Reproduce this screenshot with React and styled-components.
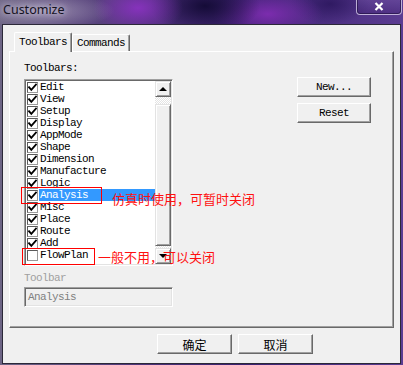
import React from "react";
import styled, { createGlobalStyle } from "styled-components";

const GlobalStyle = createGlobalStyle`
  html, body {
    margin: 0;
    padding: 0;
    background: #3a2468;
  }
  body {
    width: 403px;
    height: 365px;
    overflow: hidden;
  }
`;

const mono = `"Liberation Mono", "DejaVu Sans Mono", monospace`;
const cjk = `"Noto Sans CJK SC", "Noto Sans", sans-serif`;

const Window = styled.div`
  position: relative;
  width: 403px;
  height: 365px;
  box-sizing: border-box;
  display: flex;
  flex-direction: column;
  padding: 0 2px 1px 2px;
  background:
    radial-gradient(ellipse 70px 18px at 45px 11px, rgba(190, 180, 205, 0.55), transparent),
    radial-gradient(ellipse 45px 26px at 138px 8px, rgba(140, 50, 195, 0.9), transparent),
    radial-gradient(ellipse 55px 28px at 205px 6px, rgba(18, 10, 52, 0.95), transparent),
    radial-gradient(ellipse 55px 24px at 268px 14px, rgba(130, 45, 180, 0.9), transparent),
    radial-gradient(ellipse 40px 20px at 330px 4px, rgba(40, 20, 90, 0.8), transparent),
    linear-gradient(90deg, #6d6585 0%, #4e3379 35%, #3b2170 60%, #5b3c92 100%);
`;

const TitleBar = styled.div`
  height: 24px;
  display: flex;
  align-items: flex-start;
  padding-left: 1px;
`;

const Title = styled.div`
  font-family: "Noto Sans", "Open Sans", sans-serif;
  font-size: 12.5px;
  line-height: 16px;
  padding-top: 2px;
  color: #14121e;
  text-shadow: 0 0 6px rgba(230, 225, 240, 0.9), 0 0 10px rgba(230, 225, 240, 0.6);
`;

const CloseButton = styled.div`
  margin-left: auto;
  margin-right: -1px;
  margin-top: -1px;
  width: 46px;
  height: 16px;
  box-sizing: border-box;
  border: 1px solid rgba(225, 215, 240, 0.75);
  border-top: none;
  border-radius: 0 0 4px 4px;
  box-shadow: inset 0 0 0 1px rgba(30, 15, 60, 0.6);
  background: linear-gradient(180deg, rgba(120, 90, 170, 0.35), rgba(60, 30, 110, 0.35));
  display: flex;
  align-items: center;
  justify-content: center;
`;

const Client = styled.div`
  flex: 1;
  display: flex;
  flex-direction: column;
  background: #f0f0f0;
  border: 1px solid #2b2838;
`;

const TabArea = styled.div`
  padding: 7px 0 0 6px;
  display: flex;
  flex-direction: column;
`;

const TabRow = styled.div`
  display: flex;
  align-items: flex-end;
  margin-left: 5px;
  height: 19px;
  position: relative;
  z-index: 1;
`;

const Tab = styled.div`
  box-sizing: border-box;
  width: 58px;
  height: ${(p) => (p.$active ? "20px" : "17px")};
  margin-bottom: ${(p) => (p.$active ? "-1px" : "0")};
  background: #f0f0f0;
  border-top: 1px solid #ffffff;
  border-left: 1px solid #ffffff;
  border-right: 1px solid #696969;
  box-shadow: inset -1px 0 0 #a0a0a0;
  border-radius: 2px 2px 0 0;
  font-family: ${mono};
  font-size: 11px;
  letter-spacing: -0.6px;
  line-height: 12px;
  color: #000;
  display: flex;
  align-items: center;
  justify-content: center;
  padding-bottom: ${(p) => (p.$active ? "1px" : "0")};
`;

const Panel = styled.div`
  box-sizing: border-box;
  width: 385px;
  height: 277px;
  border-top: 1px solid #ffffff;
  border-left: 1px solid #ffffff;
  border-right: 1px solid #696969;
  border-bottom: 1px solid #696969;
  box-shadow: inset -1px -1px 0 #a0a0a0;
  display: flex;
`;

const LeftCol = styled.div`
  padding: 10px 0 0 14px;
  width: 149px;
  display: flex;
  flex-direction: column;
`;

const RightCol = styled.div`
  padding: 25px 0 0 124px;
  display: flex;
  flex-direction: column;
  gap: 6px;
`;

const Label = styled.div`
  font-family: ${mono};
  font-size: 11px;
  letter-spacing: -0.6px;
  line-height: 12px;
  height: 12px;
  color: ${(p) => (p.$disabled ? "#a0a0a0" : "#000")};
  white-space: nowrap;
  margin-top: ${(p) => p.$mt || "0"};
`;

const ListBox = styled.div`
  margin-top: 5px;
  box-sizing: border-box;
  width: 149px;
  height: 187px;
  background: #fff;
  border-top: 1px solid #a0a0a0;
  border-left: 1px solid #a0a0a0;
  border-right: 1px solid #ffffff;
  border-bottom: 1px solid #ffffff;
  box-shadow: inset 1px 1px 0 #696969, inset -1px -1px 0 #e3e3e3;
  padding: 1px;
  display: flex;
  overflow: hidden;
`;

const Items = styled.div`
  flex: 1;
  display: flex;
  flex-direction: column;
  padding-left: 1px;
  min-width: 0;
`;

const Row = styled.div`
  height: 12px;
  display: flex;
  align-items: center;
  flex-shrink: 0;
`;

const Check = styled.div`
  box-sizing: border-box;
  width: 11px;
  height: 11px;
  background: #fff;
  border-top: 1px solid #5a5a5a;
  border-left: 1px solid #5a5a5a;
  border-right: 1px solid #9a9a9a;
  border-bottom: 1px solid #9a9a9a;
  display: flex;
  align-items: center;
  justify-content: center;
  flex-shrink: 0;
`;

const ItemText = styled.div`
  margin-left: 1px;
  flex: 1;
  height: 12px;
  padding-left: 1px;
  font-family: ${mono};
  font-size: 11px;
  letter-spacing: -0.6px;
  line-height: 12px;
  color: ${(p) => (p.$selected ? "#fff" : "#000")};
  background: ${(p) => (p.$selected ? "#3399ff" : "transparent")};
  white-space: nowrap;
`;

const ScrollBar = styled.div`
  width: 16px;
  display: flex;
  flex-direction: column;
  background-color: #fff;
  background-image: repeating-conic-gradient(#e4e4e4 0 25%, #ffffff 0 50%);
  background-size: 2px 2px;
`;

const Raised = styled.div`
  box-sizing: border-box;
  background: #f0f0f0;
  border-top: 1px solid #e3e3e3;
  border-left: 1px solid #e3e3e3;
  border-right: 1px solid #696969;
  border-bottom: 1px solid #696969;
  box-shadow: inset 1px 1px 0 #ffffff, inset -1px -1px 0 #a0a0a0;
`;

const ScrollButton = styled(Raised)`
  height: 16px;
  display: flex;
  align-items: center;
  justify-content: center;
  flex-shrink: 0;
`;

const Thumb = styled(Raised)`
  margin-top: 7px;
  height: 142px;
  flex-shrink: 0;
`;

const Spacer = styled.div`
  flex: 1;
`;

const Arrow = styled.div`
  width: 0;
  height: 0;
  border-left: 4px solid transparent;
  border-right: 4px solid transparent;
  ${(p) =>
    p.$down
      ? "border-top: 4px solid #000;"
      : "border-bottom: 4px solid #000;"}
`;

const TextField = styled.div`
  margin-top: 3px;
  box-sizing: border-box;
  width: 149px;
  height: 20px;
  background: #f0f0f0;
  border-top: 1px solid #a0a0a0;
  border-left: 1px solid #a0a0a0;
  border-right: 1px solid #ffffff;
  border-bottom: 1px solid #ffffff;
  box-shadow: inset 1px 1px 0 #696969, inset -1px -1px 0 #e3e3e3;
  padding: 3px 0 0 3px;
  font-family: ${mono};
  font-size: 11px;
  letter-spacing: -0.6px;
  line-height: 12px;
  color: #808080;
`;

const Button = styled(Raised)`
  width: ${(p) => p.$w || "74px"};
  height: 20px;
  display: flex;
  align-items: center;
  justify-content: center;
  font-family: ${(p) => (p.$cjk ? cjk : mono)};
  font-size: ${(p) => (p.$cjk ? "12px" : "11px")};
  letter-spacing: ${(p) => (p.$cjk ? "0" : "-0.6px")};
  color: #000;
  border-top-color: #ffffff;
  border-left-color: #ffffff;
  box-shadow: inset -1px -1px 0 #a0a0a0;
`;

const Footer = styled.div`
  margin-top: 6px;
  padding-left: 154px;
  display: flex;
  gap: 6px;
`;

const Mark = styled.div`
  position: absolute;
  left: ${(p) => p.$x}px;
  top: ${(p) => p.$y}px;
  width: ${(p) => p.$w}px;
  height: ${(p) => p.$h}px;
  box-sizing: border-box;
  border: 1px solid #ff0000;
  pointer-events: none;
  z-index: 2;
`;

const Note = styled.div`
  position: absolute;
  left: ${(p) => p.$x}px;
  top: ${(p) => p.$y}px;
  font-family: ${cjk};
  font-size: 13px;
  line-height: 16px;
  color: #ff1010;
  white-space: nowrap;
  pointer-events: none;
  z-index: 2;
`;

const toolbars = [
  ["Edit", true],
  ["View", true],
  ["Setup", true],
  ["Display", true],
  ["AppMode", true],
  ["Shape", true],
  ["Dimension", true],
  ["Manufacture", true],
  ["Logic", true],
  ["Analysis", true],
  ["Misc", true],
  ["Place", true],
  ["Route", true],
  ["Add", true],
  ["FlowPlan", false],
];

const CheckMark = () => (
  <svg width="9" height="9" viewBox="0 0 9 9">
    <polyline
      points="1,4.2 3.3,6.8 8,1.5"
      fill="none"
      stroke="#000"
      strokeWidth="1.8"
      strokeLinecap="square"
    />
  </svg>
);

export default function App() {
  return (
    <>
      <GlobalStyle />
      <Window>
        <TitleBar>
          <Title>Customize</Title>
          <CloseButton>
            <svg width="10" height="9" viewBox="0 0 10 9">
              <path d="M1.5 1 L8.5 8 M8.5 1 L1.5 8" stroke="#fff" strokeWidth="2.2" />
            </svg>
          </CloseButton>
        </TitleBar>
        <Client>
          <TabArea>
            <TabRow>
              <Tab $active>Toolbars</Tab>
              <Tab>Commands</Tab>
            </TabRow>
            <Panel>
              <LeftCol>
                <Label>Toolbars:</Label>
                <ListBox>
                  <Items>
                    {toolbars.map(([name, on]) => (
                      <Row key={name}>
                        <Check>{on && <CheckMark />}</Check>
                        <ItemText $selected={name === "Analysis"}>{name}</ItemText>
                      </Row>
                    ))}
                  </Items>
                  <ScrollBar>
                    <ScrollButton>
                      <Arrow />
                    </ScrollButton>
                    <Thumb />
                    <Spacer />
                    <ScrollButton>
                      <Arrow $down />
                    </ScrollButton>
                  </ScrollBar>
                </ListBox>
                <Label $disabled $mt="6px">Toolbar</Label>
                <TextField>Analysis</TextField>
              </LeftCol>
              <RightCol>
                <Button>New...</Button>
                <Button>Reset</Button>
              </RightCol>
            </Panel>
          </TabArea>
          <Footer>
            <Button $cjk $w="75px">确定</Button>
            <Button $cjk $w="75px">取消</Button>
          </Footer>
        </Client>
        <Mark $x={21} $y={187} $w={81} $h={17} />
        <Mark $x={22} $y={248} $w={73} $h={17} />
        <Note $x={112} $y={191}>仿真时使用，可暂时关闭</Note>
        <Note $x={98} $y={249}>一般不用，可以关闭</Note>
      </Window>
    </>
  );
}
